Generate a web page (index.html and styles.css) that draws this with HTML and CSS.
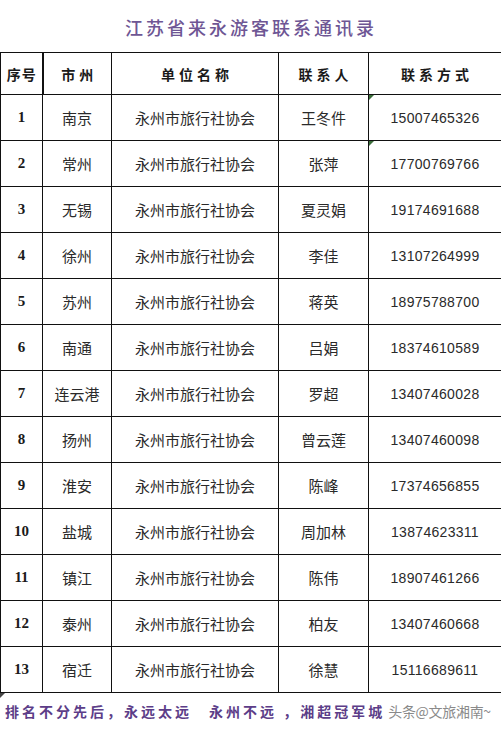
FILE: index.html
```html
<!DOCTYPE html>
<html lang="zh">
<head>
<meta charset="utf-8">
<link rel="stylesheet" href="styles.css">
</head>
<body>
<div class="page">
  <h1 class="title">江苏省来永游客联系通讯录</h1>
  <table class="sheet">
    <colgroup>
      <col class="c1"><col class="c2"><col class="c3"><col class="c4"><col class="c5">
    </colgroup>
    <thead>
      <tr>
        <th class="thick">序号</th><th>市州</th><th>单位名称</th><th>联系人</th><th>联系方式</th>
      </tr>
    </thead>
    <tbody>
      <tr><td class="no">1</td><td>南京</td><td>永州市旅行社协会</td><td>王冬件</td><td class="tel mark">15007465326</td></tr>
      <tr><td class="no">2</td><td>常州</td><td>永州市旅行社协会</td><td>张萍</td><td class="tel mark">17700769766</td></tr>
      <tr><td class="no">3</td><td>无锡</td><td>永州市旅行社协会</td><td>夏灵娟</td><td class="tel">19174691688</td></tr>
      <tr><td class="no">4</td><td>徐州</td><td>永州市旅行社协会</td><td>李佳</td><td class="tel">13107264999</td></tr>
      <tr><td class="no">5</td><td>苏州</td><td>永州市旅行社协会</td><td>蒋英</td><td class="tel">18975788700</td></tr>
      <tr><td class="no">6</td><td>南通</td><td>永州市旅行社协会</td><td>吕娟</td><td class="tel">18374610589</td></tr>
      <tr><td class="no">7</td><td>连云港</td><td>永州市旅行社协会</td><td>罗超</td><td class="tel">13407460028</td></tr>
      <tr><td class="no">8</td><td>扬州</td><td>永州市旅行社协会</td><td>曾云莲</td><td class="tel">13407460098</td></tr>
      <tr><td class="no">9</td><td>淮安</td><td>永州市旅行社协会</td><td>陈峰</td><td class="tel">17374656855</td></tr>
      <tr><td class="no">10</td><td>盐城</td><td>永州市旅行社协会</td><td>周加林</td><td class="tel">13874623311</td></tr>
      <tr><td class="no">11</td><td>镇江</td><td>永州市旅行社协会</td><td>陈伟</td><td class="tel">18907461266</td></tr>
      <tr><td class="no">12</td><td>泰州</td><td>永州市旅行社协会</td><td>柏友</td><td class="tel">13407460668</td></tr>
      <tr><td class="no">13</td><td>宿迁</td><td>永州市旅行社协会</td><td>徐慧</td><td class="tel">15116689611</td></tr>
    </tbody>
  </table>
  <p class="footer"><span class="slogan">排名不分先后，永远太远　永州不远 ，湘超冠军城</span><span class="wm">头条@文旅湘南~</span></p>
</div>
</body>
</html>
```
FILE: styles.css
```css
html, body {
  margin: 0;
  padding: 0;
  background: #fff;
}
.page {
  width: 501px;
  height: 729px;
  position: relative;
  overflow: hidden;
  font-family: "Noto Sans CJK SC", "Liberation Sans", sans-serif;
  color: #222;
}
.title {
  margin: 0;
  height: 52px;
  line-height: 54px;
  text-align: center;
  font-size: 18px;
  font-weight: 500;
  letter-spacing: 3px;
  color: #6e5694;
  padding-left: 1px;
}
.sheet {
  width: 501px;
  border-collapse: collapse;
  table-layout: fixed;
}
.c1 { width: 42px; }
.c2 { width: 69px; }
.c3 { width: 167px; }
.c4 { width: 90px; }
.c5 { width: 133px; }
.sheet th,
.sheet td {
  border: 1px solid #111;
  padding: 0;
  text-align: center;
  vertical-align: middle;
}
.sheet th {
  height: 41px;
  font-size: 14px;
  font-weight: 700;
  letter-spacing: 4px;
  text-indent: 4px;
  color: #1a1a1a;
}
.sheet th.thick {
  border-right: 2px solid #111;
  letter-spacing: 1px;
  text-indent: 1px;
}
.sheet td {
  height: 45px;
  font-size: 15px;
  color: #2a2a2a;
}
.sheet td.no {
  font-family: "Liberation Serif", serif;
  font-weight: 700;
  font-size: 15px;
  color: #1a1a1a;
}
.sheet td.tel {
  font-family: "Liberation Sans", sans-serif;
  font-size: 14px;
  letter-spacing: 0.3px;
  position: relative;
}
.sheet td.mark::before {
  content: "";
  position: absolute;
  left: 0;
  top: 0;
  border-top: 5px solid #3b6e3b;
  border-right: 5px solid transparent;
}
.footer {
  margin: 0;
  height: 37px;
  line-height: 36px;
  padding-left: 5px;
  font-size: 14px;
  font-weight: 700;
  white-space: nowrap;
  position: relative;
}
.footer::before {
  content: "";
  position: absolute;
  left: 0;
  top: 0;
  border-top: 5px solid #444;
  border-right: 5px solid transparent;
}
.slogan {
  color: #5c3d88;
  letter-spacing: 3px;
}
.wm {
  margin-left: 3px;
  color: #8a8a8a;
  font-weight: 400;
  font-size: 14px;
  letter-spacing: -0.3px;
}
```
